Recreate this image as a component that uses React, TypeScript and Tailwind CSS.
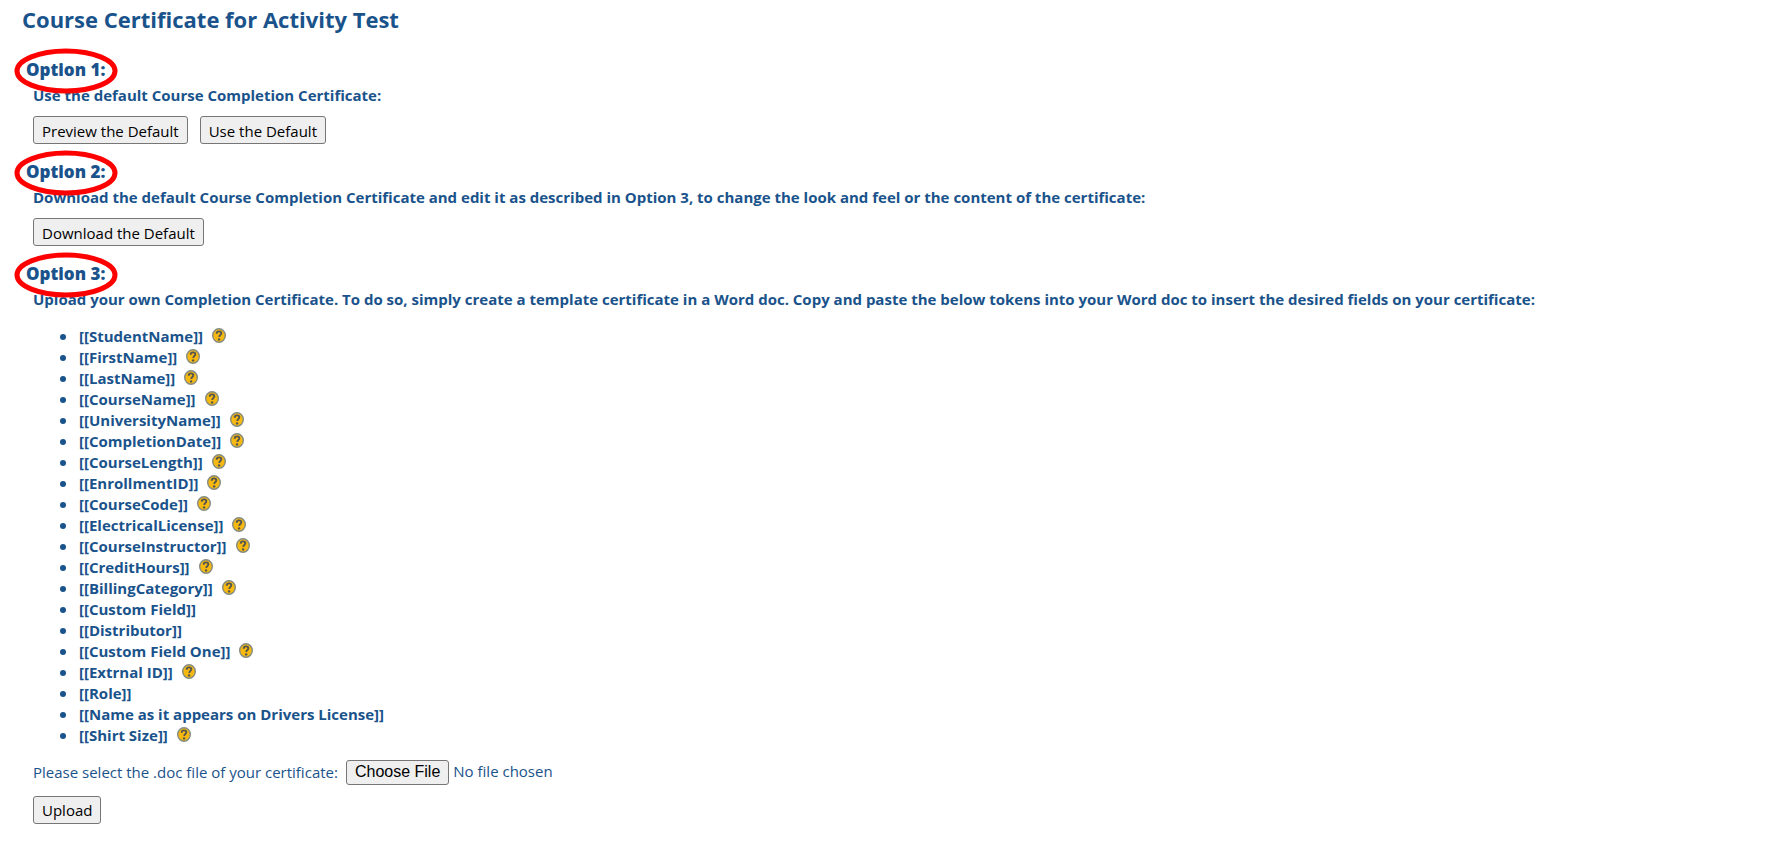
import { useId } from "react";
import type { ReactNode } from "react";

type Token = { name: string; help?: string };

const tokens: Token[] = [
  { name: "StudentName", help: "Full name of the student" },
  { name: "FirstName", help: "First name of the student" },
  { name: "LastName", help: "Last name of the student" },
  { name: "CourseName", help: "Name of the course" },
  { name: "UniversityName", help: "Name of the university" },
  { name: "CompletionDate", help: "Date the course was completed" },
  { name: "CourseLength", help: "Length of the course" },
  { name: "EnrollmentID", help: "ID of the enrollment" },
  { name: "CourseCode", help: "Code of the course" },
  { name: "ElectricalLicense", help: "Electrical license number" },
  { name: "CourseInstructor", help: "Instructor of the course" },
  { name: "CreditHours", help: "Credit hours of the course" },
  { name: "BillingCategory", help: "Billing category of the course" },
  { name: "Custom Field" },
  { name: "Distributor" },
  { name: "Custom Field One", help: "Custom field" },
  { name: "Extrnal ID", help: "Custom field" },
  { name: "Role" },
  { name: "Name as it appears on Drivers License" },
  { name: "Shirt Size", help: "Custom field" },
];

function HelpIcon({ title }: { title: string }) {
  return (
    <svg className="mb-[2px] ml-[9px] h-[15px] w-[14px]" viewBox="0 0 14 15" role="img" aria-label={title}>
      <ellipse cx="7" cy="7.5" rx="6.3" ry="6.8" fill="#f7b90f" stroke="#858c80" strokeWidth="1.4" />
      <path
        d="M4.7 5.7C4.7 4.2 5.7 3.4 7 3.4c1.4 0 2.3.8 2.3 1.9 0 1.6-2 1.6-2 3.6"
        fill="none"
        stroke="#54564f"
        strokeWidth="1.9"
      />
      <circle cx="7.1" cy="11.4" r="1.2" fill="#54564f" />
    </svg>
  );
}

function Button({ children }: { children: ReactNode }) {
  return (
    <button
      type="button"
      className="h-7 rounded-[3px] border border-[#767676] bg-[#efefef] px-2 pt-px text-[15px] leading-6 text-black hover:bg-[#e5e5e5]"
    >
      {children}
    </button>
  );
}

function Option({ title, text, children }: { title: string; text: string; children: ReactNode }) {
  return (
    <section>
      <div className="relative">
        <h2 className="pl-[26px] text-[17px] leading-6 font-extrabold">{title}</h2>
        {/* red marker around the option title */}
        <svg
          className="pointer-events-none absolute -top-[10px] left-[14px] z-10 h-[46px] w-[104px]"
          viewBox="0 0 104 46"
          fill="none"
          aria-hidden="true"
        >
          <ellipse cx="52" cy="23" rx="49" ry="20" stroke="#ff0000" strokeWidth="5" />
        </svg>
      </div>
      <div className="pl-[33px]">
        <p className="text-[15px] leading-[26px] font-bold">{text}</p>
        {children}
      </div>
    </section>
  );
}

export default function App() {
  const fileId = useId();

  return (
    <main className="min-h-screen bg-white pt-1 pb-4 font-['Open_Sans','Noto_Sans',sans-serif] text-[#1a538b]">
      <h1 className="pl-[22px] text-[22px] leading-[30px] font-bold">
        Course Certificate for Activity Test
      </h1>

      <div className="mt-6 flex flex-col gap-4">
        <Option title="Option 1:" text="Use the default Course Completion Certificate:">
          <div className="mt-2 flex gap-3">
            <Button>Preview the Default</Button>
            <Button>Use the Default</Button>
          </div>
        </Option>

        <Option
          title="Option 2:"
          text="Download the default Course Completion Certificate and edit it as described in Option 3, to change the look and feel or the content of the certificate:"
        >
          <div className="mt-2 flex">
            <Button>Download the Default</Button>
          </div>
        </Option>

        <Option
          title="Option 3:"
          text="Upload your own Completion Certificate. To do so, simply create a template certificate in a Word doc. Copy and paste the below tokens into your Word doc to insert the desired fields on your certificate:"
        >
          <ul className="mt-[14px] pl-[27px] text-[15px] leading-[21px] font-bold">
            {tokens.map((token) => (
              <li
                key={token.name}
                className="flex items-center before:mr-[13px] before:size-[6px] before:rounded-full before:bg-[#1a538b]"
              >
                [[{token.name}]]
                {token.help && <HelpIcon title={token.help} />}
              </li>
            ))}
          </ul>

          <div className="mt-[13px] flex items-center gap-2 text-[15px] leading-6">
            <label htmlFor={fileId}>Please select the .doc file of your certificate:</label>
            <input
              id={fileId}
              type="file"
              accept=".doc,.docx"
              className="file:mr-1 file:h-[25px] file:rounded-[3px] file:border file:border-solid file:border-[#767676] file:bg-[#efefef] file:px-2 file:font-['Liberation_Sans',sans-serif] file:text-base file:leading-5 file:text-black"
            />
          </div>
          <div className="mt-[11px] flex">
            <Button>Upload</Button>
          </div>
        </Option>
      </div>
    </main>
  );
}
